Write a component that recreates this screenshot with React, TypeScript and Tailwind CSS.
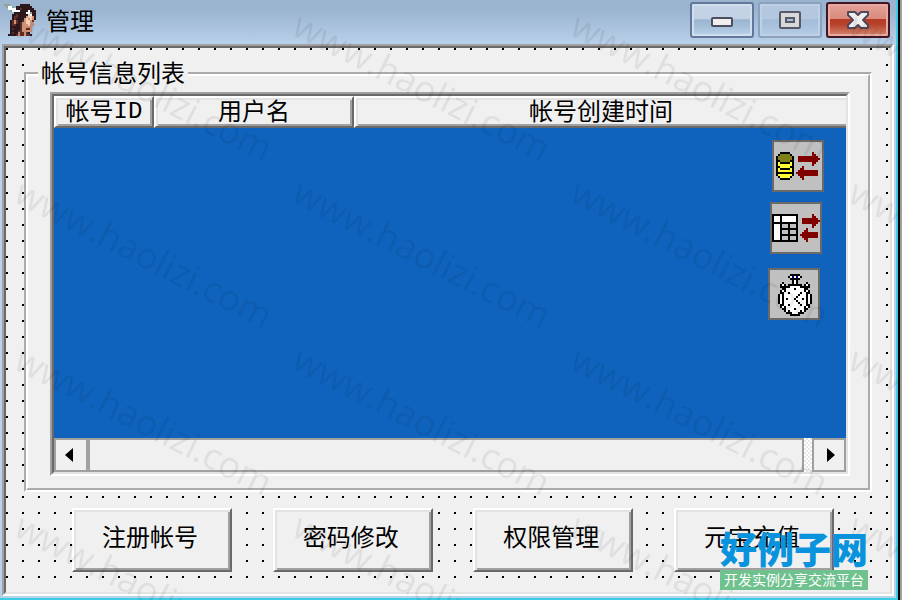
import type { ReactNode } from "react";

const PALETTE: Record<string, string> = {
  K: "#000000",
  W: "#ffffff",
  Y: "#ffff33",
  O: "#808018",
  R: "#800000",
  N: "#00008b",
  D: "#2b171c",
  B: "#5e3029",
  S: "#cf9277",
  L: "#f3cdb4",
  G: "#8fa39c",
};

const FACE = [
  "GGG.....DDDDD...",
  ".GWWG.DDDDDDDD..",
  "..WWWWDDBDDDDDD.",
  "...GWWWWDDDDWDDD",
  ".....DDDDDDWWGDD",
  "....DDBDDDDDLWDD",
  "....DBBDDDDSLLSD",
  "....DBDDDDSLSLSD",
  "...DBSBDDBSLLSB.",
  "...DBSBDBSSLLSS.",
  "...DBBDDBSSSLSS.",
  "...DDDDDBSSSSS..",
  "...DBDDDBSSBBS..",
  "...DDDDBBSSSSS..",
  "...DBDDSBBSBD...",
  "..DDDDBSBBSBBD..",
];

const CYLINDER = [
  "..KKKKK..",
  ".KOOOOOK.",
  "KOOOOOOOK",
  "KOOOOOOOK",
  "KKOOOOOKK",
  "KYKKKKKYK",
  "KYYYYYYYK",
  "KKYYYYYKK",
  "KYKKKKKYK",
  "KYYYYYYYK",
  "KKKKKKKKK",
  "KYYYYYYYK",
  ".KYYYYYK.",
  "..KKKKK..",
];

const RIGHT_ARROW = [
  ".......R....",
  ".......RR...",
  "RRRRRRRRRR..",
  "RRRRRRRRRRR.",
  "RRRRRRRRRR..",
  ".......RR...",
  ".......R....",
];

const LEFT_ARROW = [
  "...R.......",
  "..RR.......",
  ".RRRRRRRRRR",
  "RRRRRRRRRRR",
  ".RRRRRRRRRR",
  "..RR.......",
  "...R.......",
];

const SHEET = [
  "KKKKKKKKKKKKK",
  "KWWWKWWWWWWWK",
  "KWWWKWWWWWWWK",
  "KWWWKWWWWWWWK",
  "KKKKKKKKKKKKK",
  "KWWWK...K...K",
  "KWWWK...K...K",
  "KWWWKKKKKKKKK",
  "KWWWK...K...K",
  "KWWWK...K...K",
  "KWWWKKKKKKKKK",
  "KWWWK...K...K",
  "KWWWK...K...K",
  "KKKKKKKKKKKKK",
];

const STOPWATCH = [
  "......KKKKK......",
  ".....KWNWNWK.....",
  "......KKKKK......",
  ".......KWK.......",
  "..K....KWK....K..",
  ".KWK.KKKKKKK.KWK.",
  ".KKKKKWWWWWKKKKK.",
  "..KKWWWWKWWWWKK..",
  ".KWKWWWWWWWWWKWK.",
  ".KKWWKWWWWWKWWKK.",
  "KWKWWWWWWWKWWWKWK",
  "KWKWWWWWWKWWWWKWK",
  "KWKWKWWWKWWWKWKWK",
  "KWKWWWWWWKWWWWKWK",
  "KWKWWWWWWWKWWWKWK",
  ".KKWWKWWWWWKWWKK.",
  ".KWKWWWWWWWWWKWK.",
  "..KKWWWWKWWWWKK..",
  "...KWKWWWWWKWK...",
  "....KKKWWWKKK....",
  "......KKKKK......",
];

function Pixels({ rows, x = 0, y = 0 }: { rows: string[]; x?: number; y?: number }) {
  return (
    <g shapeRendering="crispEdges">
      {rows.flatMap((row, j) =>
        [...row].map((c, i) =>
          c === "." ? null : (
            <rect key={`${i}-${j}`} x={x + i} y={y + j} width={1} height={1} fill={PALETTE[c]} />
          ),
        ),
      )}
    </g>
  );
}

/** Non-visual component dropped on the form (dataset, query, timer). */
function Component({ label, className, children }: { label: string; className: string; children: ReactNode }) {
  return (
    <button
      type="button"
      aria-label={label}
      className={`absolute size-[52px] bg-[#c0c0c0] shadow-[inset_0_0_0_2px_#696969] ${className}`}
    >
      <svg viewBox="0 0 26 26" className="size-full" aria-hidden>
        {children}
      </svg>
    </button>
  );
}

function TitleBar() {
  const button = "flex h-9 w-16 items-center justify-center rounded-[3px] border-2";
  return (
    <header className="flex h-11 items-start bg-linear-to-b from-[#9ab3ce] from-20% to-[#b9d0ea] pl-1 pr-1.5">
      <svg viewBox="0 0 16 16" className="mt-1 size-8 shrink-0" aria-hidden>
        <Pixels rows={FACE} />
      </svg>
      <h1 className="ml-2.5 mt-1.5 flex-1 text-2xl leading-8">管理</h1>
      <div className="mt-0.5 flex gap-1">
        <button
          type="button"
          aria-label="最小化"
          className={`${button} border-[#62779a] bg-linear-to-b from-[#c3d3e5] from-45% via-[#9ab5cf] via-50% to-[#b9d0ea] shadow-[inset_0_0_0_2px_#cfdfef]`}
        >
          <svg viewBox="0 0 22 10" className="mt-1 h-2.5 w-[22px]" aria-hidden>
            <rect x="1" y="1" width="20" height="8" rx="1" fill="#f0eeee" stroke="#4b4d60" strokeWidth="2" />
          </svg>
        </button>
        <button
          type="button"
          aria-label="最大化"
          className={`${button} border-[#8ba1bd] bg-linear-to-b from-[#b3c8df] from-45% via-[#a3bcd7] via-50% to-[#b5cce6] shadow-[inset_0_0_0_2px_#bdd0e6]`}
        >
          <svg viewBox="0 0 22 18" className="h-[18px] w-[22px]" aria-hidden>
            <rect x="1" y="1" width="20" height="16" rx="1" fill="#d8d8d8" stroke="#55596a" strokeWidth="2" />
            <rect x="7" y="7" width="8" height="4" fill="#a9c0d9" stroke="#55596a" strokeWidth="2" />
          </svg>
        </button>
        <button
          type="button"
          aria-label="关闭"
          className={`${button} border-[#431422] bg-[linear-gradient(#e4a298,#d98a7c_48%,#b63a24_48%,#b8432c_65%,#d58a74)] shadow-[inset_0_0_0_2px_#e6aaa0]`}
        >
          <svg viewBox="0 0 22 18" className="h-[18px] w-[22px]" aria-hidden>
            <path
              d="M1 1h7l3 3 3-3h7v3l-5 5 5 5v3h-7l-3-3-3 3H1v-3l5-5-5-5z"
              fill="#f1eeee"
              stroke="#50485a"
              strokeWidth="2"
              strokeLinejoin="round"
            />
          </svg>
        </button>
      </div>
    </header>
  );
}

const RAISED =
  "border-2 border-t-white border-l-white border-b-[#696969] border-r-[#696969] shadow-[inset_2px_2px_0_#e3e3e3,inset_-2px_-2px_0_#a0a0a0]";

function AccountTable() {
  return (
    <table className="w-full table-fixed border-separate border-spacing-0">
      <thead>
        <tr className="h-8 text-2xl leading-6">
          <th className={`w-[100px] p-0 font-normal ${RAISED}`}>
            <span className="flex h-6 items-center justify-center">
              帐号<span className="font-['Liberation_Mono']">ID</span>
            </span>
          </th>
          <th className={`w-[200px] p-0 font-normal ${RAISED}`}>用户名</th>
          <th className="border-y-2 border-l-2 border-t-white border-b-[#696969] border-l-white p-0 font-normal shadow-[inset_2px_2px_0_#e3e3e3,inset_0_-2px_0_#a0a0a0]">
            帐号创建时间
          </th>
        </tr>
      </thead>
    </table>
  );
}

function ScrollBar() {
  return (
    <div className="flex h-[34px] bg-[conic-gradient(#fff_25%,#e8e8e8_0_50%,#fff_0_75%,#e8e8e8_0)] bg-[size:4px_4px]">
      <button
        type="button"
        aria-label="向左滚动"
        className="flex w-[34px] items-center justify-center border-2 border-[#a0a0a0] bg-[#f0f0f0]"
      >
        <svg viewBox="0 0 8 14" className="mr-1 h-3.5 w-2" aria-hidden>
          <path d="M8 0v14L0 7z" />
        </svg>
      </button>
      <div className="mr-2 flex-1 border-2 border-[#a0a0a0] bg-[#f0f0f0]" />
      <button
        type="button"
        aria-label="向右滚动"
        className="flex w-[34px] items-center justify-center border-2 border-[#a0a0a0] bg-[#f0f0f0]"
      >
        <svg viewBox="0 0 8 14" className="ml-1 h-3.5 w-2" aria-hidden>
          <path d="M0 0v14l8-7z" />
        </svg>
      </button>
    </div>
  );
}

function AccountList() {
  return (
    <div className="border-2 border-t-[#a0a0a0] border-l-[#a0a0a0] border-b-white border-r-white">
      <div className="border-2 border-t-[#696969] border-l-[#696969] border-b-[#e3e3e3] border-r-[#e3e3e3]">
        <AccountTable />
        <div className="relative min-h-[310px] bg-[#0f63bd]">
          <Component label="数据集" className="right-[22px] top-3">
            <Pixels rows={CYLINDER} x={2} y={6} />
            <Pixels rows={RIGHT_ARROW} x={13} y={6} />
            <Pixels rows={LEFT_ARROW} x={12} y={13} />
          </Component>
          <Component label="查询" className="right-6 top-[74px]">
            <Pixels rows={SHEET} x={1} y={6} />
            <Pixels rows={RIGHT_ARROW.map((r) => r.slice(2))} x={16} y={6} />
            <Pixels rows={LEFT_ARROW.map((r) => r.slice(0, 9))} x={15} y={13} />
          </Component>
          <Component label="定时器" className="right-[26px] top-[140px]">
            <Pixels rows={STOPWATCH} x={5} y={3} />
          </Component>
        </div>
        <ScrollBar />
      </div>
    </div>
  );
}

function Watermark() {
  return (
    <svg className="pointer-events-none absolute inset-0 size-full" aria-hidden>
      <defs>
        <pattern id="mark" width="278" height="167" patternUnits="userSpaceOnUse" x="10" y="8">
          <text
            x="2"
            y="26"
            transform="rotate(27 2 26)"
            fontFamily="'Open Sans', sans-serif"
            fontSize="36"
            fill="#000"
            fillOpacity="0.07"
          >
            www.haolizi.com
          </text>
        </pattern>
      </defs>
      <rect width="100%" height="100%" fill="url(#mark)" />
    </svg>
  );
}

function SiteLogo() {
  return (
    <div className="pointer-events-none absolute bottom-2.5 right-8 flex flex-col items-center">
      <span className="text-[37px] font-black leading-9 text-[#0a93dd]">好例子网</span>
      <span className="bg-[#6fc18e] px-1 text-sm leading-5 text-white">开发实例分享交流平台</span>
    </div>
  );
}

const ACTIONS = ["注册帐号", "密码修改", "权限管理", "元宝充值"];

export default function App() {
  return (
    <div className="relative flex min-h-screen flex-col overflow-hidden border-r-2 border-[#a0a0a0] bg-black pr-0.5 font-['Liberation_Sans','Noto_Sans_CJK_SC',sans-serif] text-black">
      <div className="flex flex-1 flex-col border-b-2 border-r-2 border-[#3bcde4] bg-[#b9d1ea]">
        <TitleBar />
        <main className="mx-0.5 mb-0.5 flex flex-1 flex-col border-2 border-t-[#a0a0a0] border-l-[#a0a0a0] border-b-white border-r-white">
          <div className="flex flex-1 flex-col border-2 border-t-[#696969] border-l-[#696969] border-b-[#e3e3e3] border-r-[#e3e3e3] bg-[#f0f0f0] bg-[conic-gradient(from_270deg_at_2px_2px,#000_90deg,transparent_0)] bg-[size:16px_16px] bg-origin-padding">
            <div className="mx-[18px] mt-3 bg-[#f0f0f0]">
              <fieldset className="border-4 border-white pb-3 pl-[22px] pr-[18px] pt-1 [border-style:groove]">
                <legend className="-ml-3 bg-[#f0f0f0] px-[3px] text-2xl leading-7">帐号信息列表</legend>
                <AccountList />
              </fieldset>
            </div>
            <div className="mb-5 ml-[66px] mr-14 mt-4 flex justify-between">
              {ACTIONS.map((label) => (
                <button
                  key={label}
                  type="button"
                  className={`h-16 w-40 bg-[#f0f0f0] pb-1 pr-1 text-2xl leading-8 ${RAISED}`}
                >
                  {label}
                </button>
              ))}
            </div>
          </div>
        </main>
      </div>
      <span className="absolute -right-0.5 top-[290px] h-3.5 w-0.5 bg-white" />
      <Watermark />
      <SiteLogo />
    </div>
  );
}
